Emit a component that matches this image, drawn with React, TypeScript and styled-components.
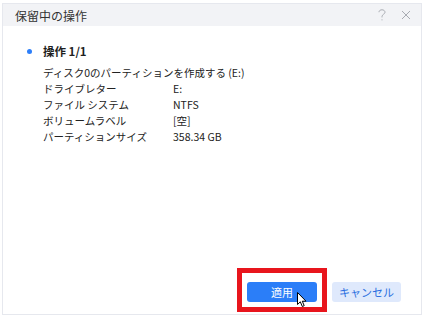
import styled, { createGlobalStyle } from 'styled-components';

const GlobalStyle = createGlobalStyle`
  html, body {
    margin: 0;
    padding: 0;
    background: #ffffff;
  }
  body {
    font-family: "Noto Sans CJK JP", "Noto Sans", sans-serif;
    color: #1f1f1f;
  }
`;

const Page = styled.div`
  position: relative;
  width: 426px;
  height: 319px;
  overflow: hidden;
  padding: 3px 0 0 2px;
  box-sizing: border-box;
`;

const Dialog = styled.div`
  width: 420px;
  height: 312px;
  box-sizing: border-box;
  border: 1px solid #e6e8ee;
  display: flex;
  flex-direction: column;
  background: #ffffff;
`;

const Header = styled.div`
  height: 22px;
  background: #f2f3f6;
  display: flex;
  align-items: center;
  padding: 0 10px 0 12px;
`;

const Title = styled.div`
  flex: 1;
  font-size: 12px;
  color: #333333;
`;

const HeaderIcons = styled.div`
  display: flex;
  align-items: center;
  gap: 15px;
`;

const Content = styled.div`
  flex: 1;
  padding: 17px 0 0 24px;
`;

const OpTitle = styled.div`
  display: flex;
  align-items: center;
  gap: 11px;
  font-size: 11.5px;
  font-weight: 700;
  height: 16px;
  margin-bottom: 6px;
`;

const Dot = styled.span`
  width: 5px;
  height: 5px;
  border-radius: 50%;
  background: #2d7ff9;
`;

const Details = styled.div`
  padding-left: 16px;
  font-size: 10.5px;
  color: #222222;
`;

const Row = styled.div<{ $full?: boolean }>`
  display: grid;
  grid-template-columns: ${(p) => (p.$full ? '1fr' : '130px 1fr')};
  height: 16px;
  line-height: 16px;
  white-space: nowrap;
`;

const Footer = styled.div`
  display: flex;
  justify-content: flex-end;
  gap: 15px;
  padding: 0 20px 12px 0;
`;

const Button = styled.button<{ $primary?: boolean }>`
  width: ${(p) => (p.$primary ? 70 : 69)}px;
  height: 20px;
  border: none;
  border-radius: 3px;
  font-family: inherit;
  font-size: 11px;
  padding: 0;
  background: ${(p) => (p.$primary ? '#2b7ef8' : '#dfe9fc')};
  color: ${(p) => (p.$primary ? '#ffffff' : '#2b6fe0')};
`;

const Highlight = styled.div`
  position: absolute;
  left: 237px;
  top: 268px;
  width: 90px;
  height: 44px;
  box-sizing: border-box;
  border: 5px solid #e8151d;
  pointer-events: none;
`;

const Cursor = styled.svg`
  position: absolute;
  left: 297px;
  top: 292px;
`;

const rows: [string, string][] = [
  ['ドライブレター', 'E:'],
  ['ファイル システム', 'NTFS'],
  ['ボリュームラベル', '[空]'],
  ['パーティションサイズ', '358.34 GB'],
];

export default function App() {
  return (
    <Page>
      <GlobalStyle />
      <Dialog>
        <Header>
          <Title>保留中の操作</Title>
          <HeaderIcons>
            <svg width="8" height="12" viewBox="0 0 8 12" fill="none" stroke="#a8abb2" strokeWidth="1">
              <path d="M1 3.2 C1 1.6 2.3 0.8 4 0.8 C5.7 0.8 7 1.8 7 3.3 C7 5 4 5.4 4 7.6 V8.4" />
              <circle cx="4" cy="10.8" r="0.6" fill="#a8abb2" stroke="none" />
            </svg>
            <svg width="10" height="10" viewBox="0 0 10 10" stroke="#a8abb2" strokeWidth="1">
              <path d="M1 1 L9 9 M9 1 L1 9" />
            </svg>
          </HeaderIcons>
        </Header>
        <Content>
          <OpTitle>
            <Dot />
            操作 1/1
          </OpTitle>
          <Details>
            <Row $full>
              <span>ディスク0のパーティションを作成する (E:)</span>
            </Row>
            {rows.map(([label, value]) => (
              <Row key={label}>
                <span>{label}</span>
                <span>{value}</span>
              </Row>
            ))}
          </Details>
        </Content>
        <Footer>
          <Button $primary>適用</Button>
          <Button>キャンセル</Button>
        </Footer>
      </Dialog>
      <Highlight />
      <Cursor width="11" height="16" viewBox="0 0 11 16">
        <path
          d="M0.5 0.5 V12.5 L3.3 9.8 L5.3 14.5 L7.2 13.7 L5.3 9.2 H9 Z"
          fill="#ffffff"
          stroke="#000000"
          strokeWidth="1"
          strokeLinejoin="round"
        />
      </Cursor>
    </Page>
  );
}
